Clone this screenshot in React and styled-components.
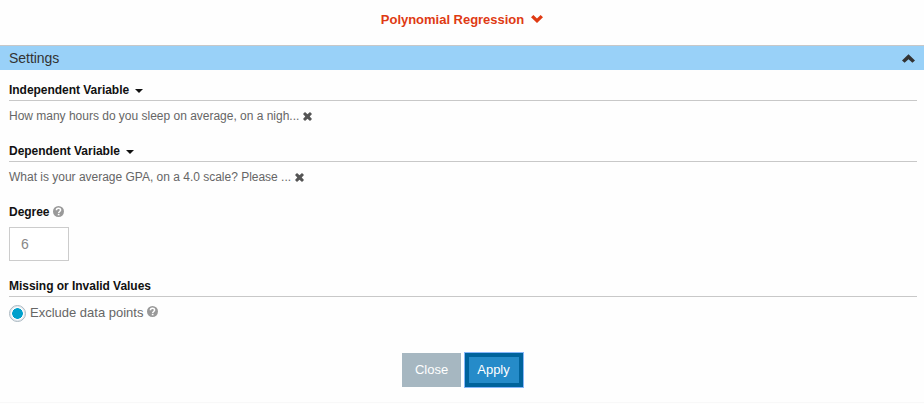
import React, { useState } from 'react';
import styled, { createGlobalStyle } from 'styled-components';

const variables = [
  {
    id: 'independent',
    title: 'Independent Variable',
    question: 'How many hours do you sleep on average, on a nigh...',
  },
  {
    id: 'dependent',
    title: 'Dependent Variable',
    question: 'What is your average GPA, on a 4.0 scale? Please ...',
  },
];

const ChevronIcon = ({ width, height, up }) => (
  <Styled.Icon width={width} height={height} viewBox="0 0 12 8" $up={up}>
    <path d="M2.4 0 6 3.4 9.6 0 12 2.2 6 8 0 2.2z" />
  </Styled.Icon>
);

const RemoveIcon = () => (
  <Styled.RemoveIcon width="9" height="9" viewBox="0 0 9 9">
    <path d="M2 0 4.5 2.3 7 0 9 2 6.7 4.5 9 7 7 9 4.5 6.7 2 9 0 7 2.3 4.5 0 2z" />
  </Styled.RemoveIcon>
);

const HelpIcon = () => (
  <Styled.HelpIcon width="11" height="11" viewBox="0 0 11 11">
    <circle cx="5.5" cy="5.5" r="5.5" />
    <path d="M3.4 4.2C3.4 1.5 7.6 1.5 7.6 4.1C7.6 5.6 5.7 5.4 5.7 7" />
    <rect x="4.8" y="7.8" width="1.7" height="1.5" />
  </Styled.HelpIcon>
);

const App = () => {
  const [degree, setDegree] = useState('6');

  return (
    <>
      <GlobalStyle />
      <Styled.Wrapper>
        <Styled.Title>
          Polynomial Regression
          <ChevronIcon width={12} height={8} />
        </Styled.Title>
        <Styled.PanelHeader>
          <span>Settings</span>
          <ChevronIcon width={13} height={9} up />
        </Styled.PanelHeader>
        <Styled.PanelBody>
          {variables.map(({ id, title, question }) => (
            <Styled.Section key={id}>
              <Styled.Heading $lined>
                {title}
                <Styled.Caret />
              </Styled.Heading>
              <Styled.Question>
                {question}
                <RemoveIcon />
              </Styled.Question>
            </Styled.Section>
          ))}
          <Styled.DegreeSection>
            <Styled.Heading>
              Degree
              <HelpIcon />
            </Styled.Heading>
            <Styled.Input value={degree} onChange={(e) => setDegree(e.target.value)} />
          </Styled.DegreeSection>
          <Styled.Heading $lined>Missing or Invalid Values</Styled.Heading>
          <Styled.Option>
            <Styled.Radio />
            <Styled.OptionText>
              Exclude data points
              <HelpIcon />
            </Styled.OptionText>
          </Styled.Option>
        </Styled.PanelBody>
        <Styled.Footer>
          <Styled.CloseButton>Close</Styled.CloseButton>
          <Styled.ApplyButton>Apply</Styled.ApplyButton>
        </Styled.Footer>
      </Styled.Wrapper>
    </>
  );
};

const GlobalStyle = createGlobalStyle`
  * {
    box-sizing: border-box;
  }

  body {
    margin: 0;
    background: #fefefe;
    font-family: 'Liberation Sans', Arial, sans-serif;
  }
`;

const Button = styled.button`
  height: 34px;
  padding: 0;
  color: #fff;
  font-family: inherit;
  font-size: 13px;
  line-height: 16px;
`;

const Styled = {
  Wrapper: styled.div`
    display: flex;
    flex-direction: column;
    width: 100%;
    height: 403px;
    border-bottom: 1px solid #f8f8f8;
  `,
  Title: styled.div`
    display: flex;
    justify-content: center;
    align-items: center;
    gap: 7px;
    height: 45px;
    padding-bottom: 7px;
    color: #df3a13;
    font-size: 13px;
    font-weight: 700;
    letter-spacing: -0.02px;
  `,
  PanelHeader: styled.div`
    display: flex;
    justify-content: space-between;
    align-items: center;
    height: 25px;
    padding: 0 9px 0 9px;
    border-top: 1px solid #c8c8c8;
    background: #99d1f8;
    color: #333;
    font-size: 14px;
    letter-spacing: -0.04px;
  `,
  PanelBody: styled.div`
    display: flex;
    flex-direction: column;
    padding: 11px 7px 0 9px;
  `,
  Section: styled.div`
    height: 61px;
  `,
  Heading: styled.div`
    display: flex;
    align-items: center;
    gap: ${({ $lined }) => ($lined ? '6px' : '3px')};
    height: ${({ $lined }) => ($lined ? '20px' : '19px')};
    padding-bottom: 2px;
    border-bottom: ${({ $lined }) => ($lined ? '1px solid #c8c8c8' : '0')};
    color: #111;
    font-size: 12px;
    font-weight: 700;
    letter-spacing: -0.03px;
  `,
  Question: styled.div`
    display: flex;
    align-items: center;
    gap: 4px;
    height: 30px;
    color: #666;
    font-size: 12px;
    letter-spacing: -0.01px;
  `,
  Caret: styled.span`
    margin-top: 2px;
    border-top: 4px solid #111;
    border-right: 4px solid transparent;
    border-left: 4px solid transparent;
  `,
  DegreeSection: styled.div`
    height: 74px;
  `,
  Input: styled.input`
    display: block;
    width: 60px;
    height: 34px;
    margin-top: 5px;
    padding: 0 11px;
    border: 1px solid #ccc;
    background: #fff;
    color: #888;
    font-family: inherit;
    font-size: 14px;
  `,
  Option: styled.label`
    display: flex;
    align-items: center;
    gap: 4px;
    height: 32px;
    color: #666;
    font-size: 13px;
  `,
  OptionText: styled.span`
    display: flex;
    align-items: center;
    gap: 4px;
    padding-bottom: 2px;

    svg {
      margin-bottom: 2px;
    }
  `,
  Radio: styled.span`
    width: 17px;
    height: 17px;
    border: 1px solid #a9b7c0;
    border-radius: 50%;
    background: radial-gradient(circle, #00a0cc 5px, #fff 5.6px);
    box-shadow: inset 0 0 0 1px #e3e8ee;
  `,
  Icon: styled.svg`
    flex-shrink: 0;
    fill: currentColor;
    transform: ${({ $up }) => ($up ? 'rotate(180deg)' : 'none')};
  `,
  RemoveIcon: styled.svg`
    flex-shrink: 0;
    fill: #555;
  `,
  HelpIcon: styled.svg`
    flex-shrink: 0;
    fill: #999;

    path {
      fill: none;
      stroke: #fff;
      stroke-width: 1.5;
    }

    rect {
      fill: #fff;
    }
  `,
  Footer: styled.div`
    display: flex;
    justify-content: center;
    gap: 4px;
    margin-top: 24px;
    padding-left: 1px;
  `,
  CloseButton: styled(Button)`
    width: 59px;
    border: 0;
    background: #a6b7c1;
  `,
  ApplyButton: styled(Button)`
    width: 58px;
    padding-right: 1px;
    border: 4px solid #00639c;
    outline: 1px solid #86b7fb;
    background: #258bc9;
  `,
};

export default App;
